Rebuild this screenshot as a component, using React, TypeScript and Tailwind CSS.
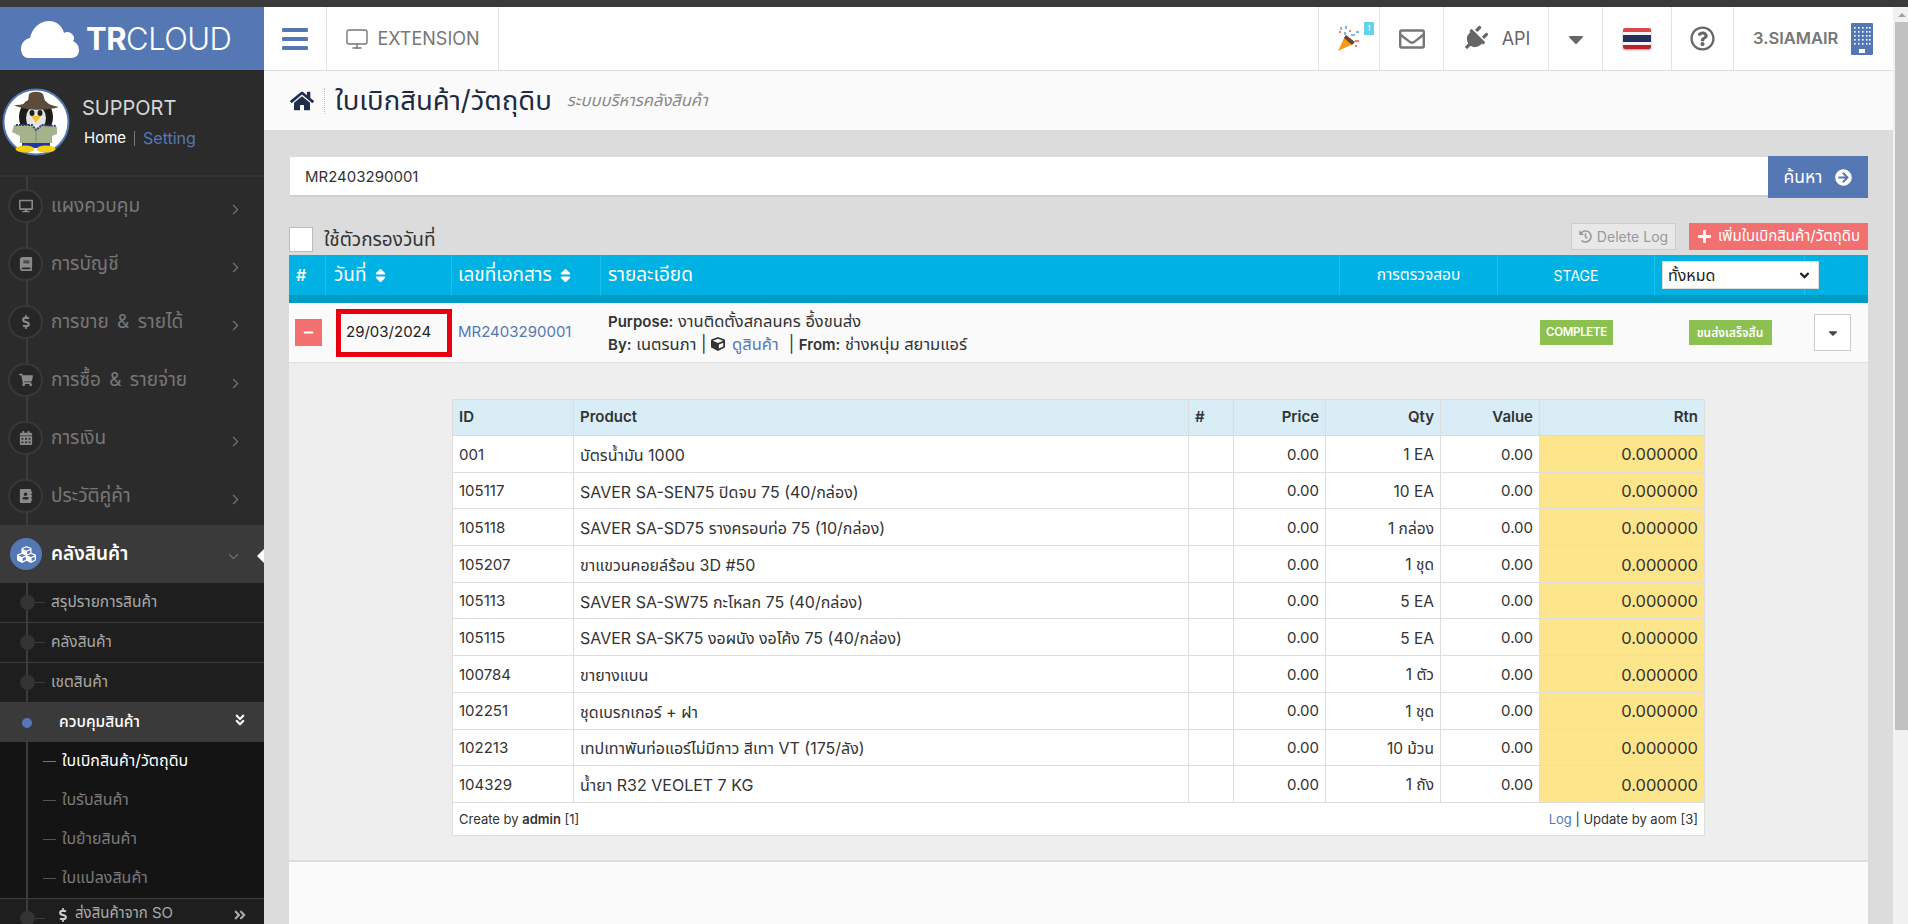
import type { ReactNode } from 'react';
import {
  FaAddressBook,
  FaAngleDoubleDown,
  FaAngleDoubleRight,
  FaAngleDown,
  FaArrowCircleRight,
  FaBook,
  FaCalendarAlt,
  FaCaretDown,
  FaCube,
  FaCubes,
  FaDesktop,
  FaDollarSign,
  FaHistory,
  FaHome,
  FaMinus,
  FaPlug,
  FaPlus,
  FaRegEnvelope,
  FaRegQuestionCircle,
  FaShoppingCart,
  FaSort,
} from 'react-icons/fa';
import { ChevronDown, ChevronRight, Monitor } from 'lucide-react';

const font = '[font-family:Inter,"Noto_Sans","Noto_Sans_Thai",sans-serif]';

const menu = [
  { label: 'แผงควบคุม', icon: <FaDesktop /> },
  { label: 'การบัญชี', icon: <FaBook /> },
  { label: 'การขาย & รายได้', icon: <FaDollarSign /> },
  { label: 'การซื้อ & รายจ่าย', icon: <FaShoppingCart /> },
  { label: 'การเงิน', icon: <FaCalendarAlt /> },
  { label: 'ประวัติคู่ค้า', icon: <FaAddressBook /> },
];

const products = [
  ['001', 'บัตรน้ำมัน 1000', '1 EA'],
  ['105117', 'SAVER SA-SEN75 ปิดจบ 75 (40/กล่อง)', '10 EA'],
  ['105118', 'SAVER SA-SD75 รางครอบท่อ 75 (10/กล่อง)', '1 กล่อง'],
  ['105207', 'ขาแขวนคอยล์ร้อน 3D #50', '1 ชุด'],
  ['105113', 'SAVER SA-SW75 กะโหลก 75 (40/กล่อง)', '5 EA'],
  ['105115', 'SAVER SA-SK75 งอผนัง งอโค้ง 75 (40/กล่อง)', '5 EA'],
  ['100784', 'ขายางแบน', '1 ตัว'],
  ['102251', 'ชุดเบรกเกอร์ + ฝา', '1 ชุด'],
  ['102213', 'เทปเทาพันท่อแอร์ไม่มีกาว สีเทา VT (175/ลัง)', '10 ม้วน'],
  ['104329', 'น้ำยา R32 VEOLET 7 KG', '1 ถัง'],
];

function Rail() {
  return <span className="absolute left-[26px] top-0 bottom-0 w-[2px] bg-[#3c3c3c]" />;
}

function Penguin() {
  return (
    <svg viewBox="0 0 68 68" className="h-[68px] w-[68px] shrink-0">
      <circle cx="34" cy="34" r="32.5" fill="#fff" stroke="#5578b5" strokeWidth="2" />
      <ellipse cx="34" cy="29" rx="17" ry="19" fill="#1c1c1c" />
      <ellipse cx="34" cy="30" rx="10" ry="12" fill="#e4e4e4" />
      <ellipse cx="30" cy="25" rx="2.5" ry="3" fill="#222" />
      <ellipse cx="38" cy="25" rx="2.5" ry="3" fill="#222" />
      <path d="M12 17 C22 17 24 15 26 13 L27 6 C30 3 38 3 41 6 L43 13 C45 15 47 17 57 19 C45 23 24 23 12 17Z" fill="#5d4c3a" />
      <path d="M29 28 L39 28 L34 35Z" fill="#f2c230" />
      <path d="M39 37 L55 39 L55 46 L50 48 L50 55 L18 55 L18 48 L10 44 L12 37 L29 37 L34 41Z" fill="#a5b38c" />
      <path d="M14 37 L30 37 L34 42 L40 37 L54 38" fill="none" stroke="#33407a" strokeWidth="2" strokeDasharray="2 1" />
      <path d="M34 42 L34 54" stroke="#7c8a68" strokeWidth="1" />
      <path d="M20 55 H48 V60 H20Z" fill="#2233b0" />
      <ellipse cx="23" cy="61" rx="9.5" ry="3.5" fill="#f6cf10" />
      <ellipse cx="44" cy="61" rx="9.5" ry="3.5" fill="#f6cf10" />
    </svg>
  );
}

function Cloud() {
  return (
    <svg viewBox="0 0 58 38" className="h-[38px] w-[58px] shrink-0">
      <path
        d="M8 38 C2 38 0 33 0 29 C0 23 4 19 9 18 C11 8 19 1 28 1 C36 1 41 6 43 13 C46 11 51 12 53 17 C53 19 53 20 52 21 C56 23 58 26 58 30 C58 35 55 38 50 38Z"
        fill="#fff"
      />
    </svg>
  );
}

function Party() {
  return (
    <svg viewBox="0 0 24 26" className="h-[26px] w-[24px]">
      <path d="M1 25 L8 10 L16 18Z" fill="#f59a1d" />
      <path d="M7 12 L9 9 L18 16 L15 19Z" fill="#6b4633" />
      <g fill="#7cb8e8">
        <rect x="3" y="1" width="2" height="3" />
        <rect x="8" y="0" width="2" height="3" />
        <rect x="7" y="6" width="2" height="3" />
        <rect x="14" y="8" width="4" height="2" />
        <rect x="19" y="5" width="3" height="2" />
      </g>
      <g fill="#ee7f6a">
        <rect x="2" y="5" width="2" height="2" />
        <rect x="12" y="4" width="2" height="2" />
        <rect x="18" y="14" width="4" height="2" />
        <rect x="18" y="19" width="2" height="2" />
      </g>
    </svg>
  );
}

function Flag() {
  return (
    <div className="flex h-[21px] w-[28px] flex-col overflow-hidden rounded-[2px] shadow-[0_1px_2px_rgba(0,0,0,0.4)]">
      <div className="h-[4px] bg-[#d9474f]" />
      <div className="h-[3px] bg-[#f4f4f4]" />
      <div className="h-[7px] bg-[#23305f]" />
      <div className="h-[3px] bg-[#f4f4f4]" />
      <div className="h-[4px] bg-[#b8232e]" />
    </div>
  );
}

function Building() {
  return (
    <svg viewBox="0 0 22 32" className="h-[32px] w-[22px]">
      <rect width="22" height="32" rx="1" fill="#5578b5" />
      <g fill="#fff">
        {[4, 8, 12, 16, 20].map((y) =>
          [3, 7, 11, 15, 18].map((x) => <rect key={`${x}-${y}`} x={x} y={y} width="1.6" height="1.6" />),
        )}
        <rect x="8" y="26" width="6" height="4" />
      </g>
    </svg>
  );
}

function TopCell({ width, children }: { width: string; children: ReactNode }) {
  return <div className={`flex items-center justify-center border-r border-[#e3e3e3] ${width}`}>{children}</div>;
}

function Sidebar() {
  return (
    <aside className="flex h-full w-[264px] shrink-0 flex-col overflow-hidden bg-[#2b2b2b]">
      <div className="flex h-[63px] shrink-0 items-center gap-[7px] bg-[#5578b5] pl-[21px] text-white">
        <Cloud />
        <span className="text-[31px] leading-none font-bold tracking-[-0.5px]">
          TR<span className="font-light">CLOUD</span>
        </span>
      </div>
      <div className="flex h-[105px] shrink-0 items-start pt-[18px] pl-[2px]">
        <Penguin />
        <div className="ml-[12px] pt-[7px]">
          <div className="text-[20px] leading-[26px] text-[#d6d6d6]">SUPPORT</div>
          <div className="mt-[7px] flex items-center text-[15px] leading-[20px] text-white">
            <span className="ml-[2px]">Home</span>
            <span className="mx-[8px] h-[15px] w-px bg-[#777]" />
            <span className="text-[16px] text-[#5578b5]">Setting</span>
          </div>
        </div>
      </div>
      <nav className="flex-1 border-t-2 border-[#333]">
        {menu.map((item) => (
          <div key={item.label} className="relative flex h-[58px] items-center">
            <Rail />
            <span className="relative ml-[8px] flex h-[34px] w-[35px] items-center justify-center rounded-full border-2 border-[#383838] bg-[#262626] text-[14px] text-[#8a8a8a]">
              {item.icon}
            </span>
            <span className="relative ml-[8px] text-[19px] text-[#777] [word-spacing:3px]">{item.label}</span>
            <ChevronRight size={17} strokeWidth={1.5} className="absolute left-[227px] top-[24px] text-[#777]" />
          </div>
        ))}
        <div className="relative flex h-[58px] items-center bg-[#3a3a3a]">
          <span className="ml-[10px] flex h-[32px] w-[32px] items-center justify-center rounded-full bg-[#5578b5] text-[19px] text-white">
            <FaCubes />
          </span>
          <span className="ml-[9px] text-[19px] font-semibold text-white">คลังสินค้า</span>
          <ChevronDown size={17} strokeWidth={1.5} className="absolute left-[225px] top-[23px] text-[#777]" />
          <span className="absolute right-0 top-[24px] h-0 w-0 border-y-[7px] border-r-[7px] border-y-transparent border-r-white" />
        </div>
        {['สรุปรายการสินค้า', 'คลังสินค้า', 'เชตสินค้า'].map((label) => (
          <div key={label} className="relative flex h-[40px] items-center border-b border-[#3c3c3c] bg-[#1e1e1e]">
            <Rail />
            <span className="relative ml-[20px] h-[15px] w-[15px] rounded-full bg-[#333]" />
            <span className="relative h-px w-[10px] bg-[#3c3c3c]" />
            <span className="relative ml-[6px] pb-[2px] text-[15.5px] text-[#a8a8a8]">{label}</span>
          </div>
        ))}
        <div className="relative flex h-[39px] items-center bg-[#3a3a3a]">
          <span className="ml-[22px] h-[10px] w-[10px] rounded-full bg-[#5578b5]" />
          <span className="ml-[27px] pb-[2px] text-[15.5px] font-medium text-white">ควบคุมสินค้า</span>
          <FaAngleDoubleDown className="absolute left-[233px] top-[10px] text-[14px] text-white" />
        </div>
        <div className="border-b border-[#3c3c3c] bg-[#141414]">
          {['ใบเบิกสินค้า/วัตถุดิบ', 'ใบรับสินค้า', 'ใบย้ายสินค้า', 'ใบแปลงสินค้า'].map((label, i) => (
            <div key={label} className="relative flex h-[39px] items-center">
              <Rail />
              <span className={`relative ml-[43px] h-px w-[13px] ${i === 0 ? 'bg-[#5578b5]' : 'bg-[#555]'}`} />
              <span className={`relative ml-[6px] pb-[4px] text-[16px] ${i === 0 ? 'text-white' : 'text-[#7a7a7a]'}`}>{label}</span>
            </div>
          ))}
        </div>
        <div className="relative flex h-[39px] items-start bg-[#1e1e1e] pt-[2px]">
          <Rail />
          <span className="relative mt-[10px] ml-[20px] h-[15px] w-[15px] rounded-full bg-[#333]" />
          <span className="relative mt-[17px] h-px w-[10px] bg-[#3c3c3c]" />
          <FaDollarSign className="relative mt-[7px] ml-[11px] text-[14px] text-[#ccc]" />
          <span className="relative ml-[5px] text-[15px] leading-[24px] text-[#aaa]">ส่งสินค้าจาก SO</span>
          <FaAngleDoubleRight className="absolute left-[233px] top-[9px] text-[14px] text-[#aaa]" />
        </div>
      </nav>
    </aside>
  );
}

function TopBar() {
  return (
    <header className="flex h-[64px] shrink-0 border-b border-[#dcdcdc] bg-white text-[#666]">
      <div className="flex w-[63px] items-center justify-center border-r border-[#e3e3e3]">
        <div className="flex h-[22px] w-[26px] flex-col justify-between">
          <span className="h-[4px] rounded-[1px] bg-[#5578b5]" />
          <span className="h-[4px] rounded-[1px] bg-[#5578b5]" />
          <span className="h-[4px] rounded-[1px] bg-[#5578b5]" />
        </div>
      </div>
      <div className="flex w-[172px] items-center justify-center gap-[8px] border-r border-[#e3e3e3]">
        <Monitor size={24} strokeWidth={1.4} className="text-[#777]" />
        <span className="text-[18px] text-[#777]">EXTENSION</span>
      </div>
      <div className="flex-1" />
      <div className="relative flex w-[62px] items-center justify-center border-x border-[#e3e3e3]">
        <Party />
        <span className="absolute left-[45px] top-[15px] flex h-[13px] w-[10px] items-center justify-center bg-[#63d3ea] text-[7px] leading-none text-white">
          1
        </span>
      </div>
      <TopCell width="w-[64px]">
        <FaRegEnvelope className="text-[26px] text-[#777]" />
      </TopCell>
      <TopCell width="w-[105px]">
        <span className="flex items-center gap-[14px]">
          <FaPlug className="rotate-45 text-[26px] text-[#666]" />
          <span className="text-[18px]">API</span>
        </span>
      </TopCell>
      <TopCell width="w-[54px]">
        <FaCaretDown className="text-[24px] text-[#666]" />
      </TopCell>
      <TopCell width="w-[69px]">
        <Flag />
      </TopCell>
      <TopCell width="w-[62px]">
        <FaRegQuestionCircle className="text-[25px] text-[#666]" />
      </TopCell>
      <div className="flex w-[159px] items-center gap-[13px] pl-[19px]">
        <span className="text-[16.5px] font-semibold text-[#777]">3.SIAMAIR</span>
        <Building />
      </div>
    </header>
  );
}

function ProductTable() {
  const head = 'border border-[#dcdcdc] bg-[#d9edf7] px-[6px] text-[15px] font-semibold text-[#333]';
  const cell = 'h-[36.7px] border border-[#dedede] px-[6px] pt-[2px] pb-0 text-[#333]';
  return (
    <table className="w-[1252px] table-fixed border-collapse bg-white">
      <colgroup>
        <col className="w-[121px]" />
        <col className="w-[615px]" />
        <col className="w-[45px]" />
        <col className="w-[92px]" />
        <col className="w-[115px]" />
        <col className="w-[99px]" />
        <col className="w-[165px]" />
      </colgroup>
      <thead>
        <tr className="h-[36px]">
          <th className={`${head} text-left`}>ID</th>
          <th className={`${head} text-left`}>Product</th>
          <th className={`${head} text-left`}>#</th>
          <th className={`${head} text-right`}>Price</th>
          <th className={`${head} text-right`}>Qty</th>
          <th className={`${head} text-right`}>Value</th>
          <th className={`${head} text-right`}>Rtn</th>
        </tr>
      </thead>
      <tbody>
        {products.map(([id, name, qty]) => (
          <tr key={id}>
            <td className={`${cell} text-[15px]`}>{id}</td>
            <td className={`${cell} text-[16px]`}>{name}</td>
            <td className={cell} />
            <td className={`${cell} text-right text-[15px]`}>0.00</td>
            <td className={`${cell} text-right text-[15.5px]`}>{qty}</td>
            <td className={`${cell} text-right text-[15px]`}>0.00</td>
            <td className={`${cell} bg-[#fde58b] text-right text-[16.5px]`}>0.000000</td>
          </tr>
        ))}
        <tr>
          <td colSpan={7} className="h-[33px] border border-[#dedede] px-[6px] pt-[2px] text-[13px] text-[#333]">
            <div className="flex justify-between">
              <span>
                Create by <b className="font-semibold">admin</b> [1]
              </span>
              <span>
                <span className="text-[#5578b5]">Log</span> | Update by aom [3]
              </span>
            </div>
          </td>
        </tr>
      </tbody>
    </table>
  );
}

function Content() {
  const th = 'flex items-center border-r border-[#1cc0ec] text-white';
  return (
    <main className="flex min-h-0 flex-1 flex-col overflow-hidden bg-[#dcdcdc]">
      <div className="flex h-[59px] shrink-0 items-center bg-[#fafafa] pl-[26px]">
        <FaHome className="text-[24px] text-[#1f2d4d]" />
        <span className="mx-[10px] h-[26px] border-l border-dotted border-[#bbb]" />
        <h1 className="text-[27.5px] text-[#1d2a44]">ใบเบิกสินค้า/วัตถุดิบ</h1>
        <span className="ml-[15px] text-[16.5px] text-[#888] italic">ระบบบริหารคลังสินค้า</span>
      </div>
      <div className="flex flex-1 flex-col px-[25px] pt-[27px]">
        <div className="ml-px flex h-[40px] items-stretch">
          <div className="flex flex-1 items-center border-b-2 border-[#d0d0d0] bg-white pt-[3px] pl-[15px] text-[15px] text-[#333]">
            MR2403290001
          </div>
          <button className="-my-px flex w-[100px] items-center justify-center gap-[13px] bg-[#5578b5] text-[17.5px] text-white">
            ค้นหา
            <FaArrowCircleRight className="text-[17px]" />
          </button>
        </div>
        <div className="flex h-[58px] items-end justify-between pb-[3px]">
          <label className="flex items-center gap-[11px] text-[19px] leading-[25px] text-[#333]">
            <span className="h-[25px] w-[24px] border border-[#bbb] bg-white" />
            <span className="pt-[1px]">ใช้ตัวกรองวันที่</span>
          </label>
          <div className="flex items-stretch gap-[13px] pb-[2px]">
            <button className="flex h-[27px] w-[105px] items-center justify-center gap-[5px] border border-[#ccc] bg-[#e8e8e8] text-[14px] text-[#999]">
              <FaHistory className="text-[13px]" />
              Delete Log
            </button>
            <button className="flex h-[27px] w-[179px] items-center justify-center gap-[6px] bg-[#f27070] text-[15px] text-white">
              <FaPlus className="text-[15px]" />
              เพิ่มใบเบิกสินค้า/วัตถุดิบ
            </button>
          </div>
        </div>
        <div className="grid h-[48px] grid-cols-[37px_126px_149px_739px_158px_157px_150px_63px] border-b-[8px] border-[#009cc3] bg-[#00b2e3]">
          <div className={`${th} pl-[7px] text-[16px] font-semibold`}>#</div>
          <div className={`${th} gap-[5px] pl-[8px] text-[19px]`}>
            วันที่ <FaSort className="text-[17px]" />
          </div>
          <div className={`${th} gap-[5px] pl-[6px] text-[19px]`}>
            เลขที่เอกสาร <FaSort className="text-[17px]" />
          </div>
          <div className={`${th} pl-[7px] text-[19px]`}>รายละเอียด</div>
          <div className={`${th} justify-center text-[15.5px]`}>การตรวจสอบ</div>
          <div className={`${th} justify-center text-[14px]`}>STAGE</div>
          <div className={`${th} relative`}>
            <div className="absolute left-[7px] top-[6px] z-10 flex h-[28px] w-[157px] items-center justify-between border border-[#ddd] bg-white pr-[6px] pl-[5px] text-[16px] text-[#222]">
              ทั้งหมด
              <FaAngleDown className="text-[15px]" />
            </div>
          </div>
          <div />
        </div>
        <div className="grid h-[60px] grid-cols-[37px_126px_149px_739px_158px_157px_150px_63px] items-center border-b border-[#dedede] bg-[#fafafa]">
          <div className="flex justify-end">
            <button className="mr-[4px] flex h-[27px] w-[27px] items-center justify-center bg-[#f27070] text-white">
              <FaMinus className="text-[11px]" />
            </button>
          </div>
          <div className="ml-[10px] flex h-[48px] items-center border-[5px] border-[#e60012] pl-[5px] text-[15px] text-[#222]">
            29/03/2024
          </div>
          <div className="pl-[6px] text-[15px] text-[#5578b5]">MR2403290001</div>
          <div className="pl-[7px] text-[16.5px] leading-[23px] text-[#333]">
            <div>
              <b className="text-[15px] font-semibold">Purpose:</b> งานติดตั้งสกลนคร อึ้งขนส่ง
            </div>
            <div className="flex items-center">
              <b className="text-[15px] font-semibold">By:</b>&nbsp;เนตรนภา |&nbsp;
              <FaCube className="text-[14px]" />
              <span className="ml-[7px] text-[#5578b5]">ดูสินค้า</span>
              <span className="ml-[10px]">
                | <b className="text-[15px] font-semibold">From:</b> ช่างหนุ่ม สยามแอร์
              </span>
            </div>
          </div>
          <div />
          <div className="flex justify-center">
            <span className="flex h-[25px] w-[73px] items-center justify-center bg-[#8cc152] text-[11.5px] font-semibold tracking-[-0.3px] text-white">
              COMPLETE
            </span>
          </div>
          <div className="flex justify-center">
            <span className="flex h-[25px] w-[83px] items-center justify-center bg-[#8cc152] text-[12px] font-semibold text-white">
              ขนส่งเสร็จสิ้น
            </span>
          </div>
          <div className="pl-[9px]">
            <button className="flex h-[37px] w-[37px] items-center justify-center border border-[#ccc] bg-white text-[#444]">
              <FaCaretDown className="text-[14px]" />
            </button>
          </div>
        </div>
        <div className="h-[499px] shrink-0 border-b-2 border-[#dedede] bg-[#eeeeee] pt-[36px] pl-[163px]">
          <ProductTable />
        </div>
        <div className="flex-1 bg-[#fafafa]" />
      </div>
    </main>
  );
}

function Scrollbar() {
  return (
    <div className="flex w-[15px] shrink-0 flex-col items-center bg-[#f1f1f1] pl-[2px]">
      <div className="flex h-[15px] items-center justify-center">
        <span className="h-0 w-0 border-x-[4px] border-b-[4px] border-x-transparent border-b-[#a3a3a3]" />
      </div>
      <div className="h-[708px] w-full bg-[#c1c1c1]" />
    </div>
  );
}

export default function App() {
  return (
    <div className={`flex h-screen flex-col overflow-hidden ${font}`}>
      <div className="h-[7px] shrink-0 bg-[#3a3a3a]" />
      <div className="flex min-h-0 flex-1">
        <Sidebar />
        <div className="flex min-w-0 flex-1 flex-col">
          <TopBar />
          <Content />
        </div>
        <Scrollbar />
      </div>
    </div>
  );
}
